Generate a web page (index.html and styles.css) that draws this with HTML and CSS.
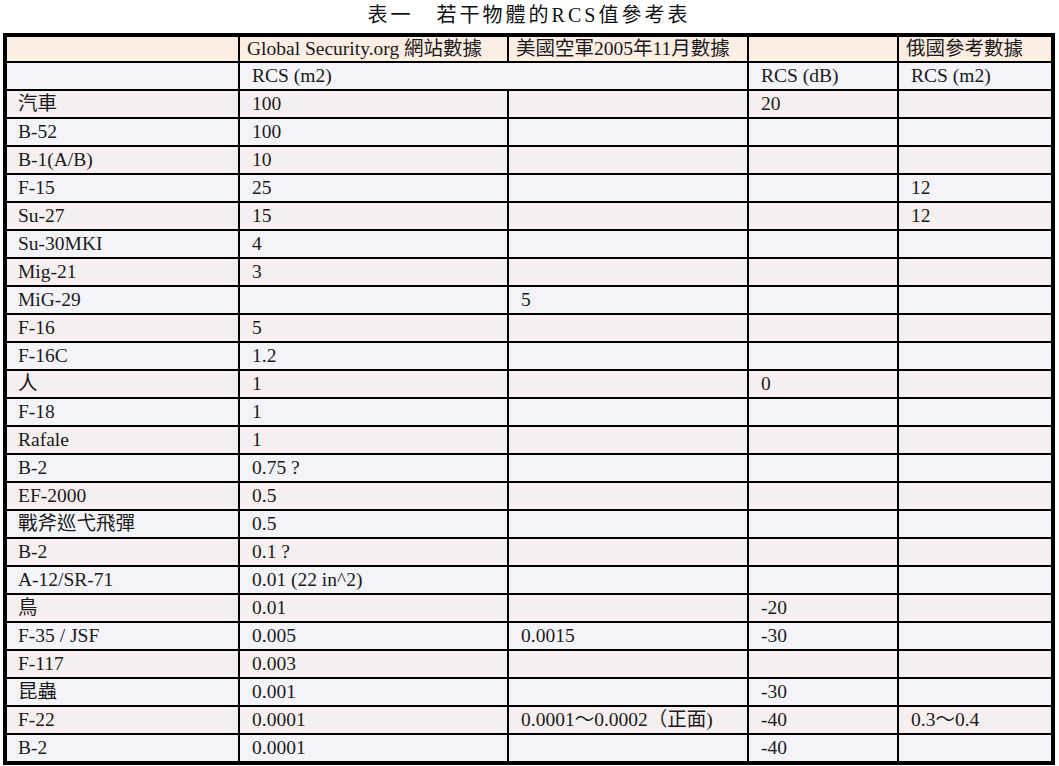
FILE: index.html
```html
<!DOCTYPE html>
<html lang="zh-Hant">
<head>
<meta charset="utf-8">
<title>若干物體的RCS值參考表</title>
<link rel="stylesheet" href="styles.css">
</head>
<body>
<div class="page">
  <h1 class="title">表一　若干物體的RCS值參考表</h1>
  <table class="rcs">
    <colgroup>
      <col class="c1"><col class="c2"><col class="c3"><col class="c4"><col class="c5">
    </colgroup>
    <tr class="head">
      <td></td><td>Global Security.org 網站數據</td><td>美國空軍2005年11月數據</td><td></td><td>俄國參考數據</td>
    </tr>
    <tr class="sub">
      <td></td><td colspan="2">RCS (m2)</td><td>RCS (dB)</td><td>RCS (m2)</td>
    </tr>
    <tr class="odd"><td>汽車</td><td>100</td><td></td><td>20</td><td></td></tr>
    <tr class="even"><td>B-52</td><td>100</td><td></td><td></td><td></td></tr>
    <tr class="odd"><td>B-1(A/B)</td><td>10</td><td></td><td></td><td></td></tr>
    <tr class="even"><td>F-15</td><td>25</td><td></td><td></td><td>12</td></tr>
    <tr class="odd"><td>Su-27</td><td>15</td><td></td><td></td><td>12</td></tr>
    <tr class="even"><td>Su-30MKI</td><td>4</td><td></td><td></td><td></td></tr>
    <tr class="odd"><td>Mig-21</td><td>3</td><td></td><td></td><td></td></tr>
    <tr class="even"><td>MiG-29</td><td></td><td>5</td><td></td><td></td></tr>
    <tr class="odd"><td>F-16</td><td>5</td><td></td><td></td><td></td></tr>
    <tr class="even"><td>F-16C</td><td>1.2</td><td></td><td></td><td></td></tr>
    <tr class="odd"><td>人</td><td>1</td><td></td><td>0</td><td></td></tr>
    <tr class="even"><td>F-18</td><td>1</td><td></td><td></td><td></td></tr>
    <tr class="odd"><td>Rafale</td><td>1</td><td></td><td></td><td></td></tr>
    <tr class="even"><td>B-2</td><td>0.75 ?</td><td></td><td></td><td></td></tr>
    <tr class="odd"><td>EF-2000</td><td>0.5</td><td></td><td></td><td></td></tr>
    <tr class="even"><td>戰斧巡弋飛彈</td><td>0.5</td><td></td><td></td><td></td></tr>
    <tr class="odd"><td>B-2</td><td>0.1 ?</td><td></td><td></td><td></td></tr>
    <tr class="even"><td>A-12/SR-71</td><td>0.01 (22 in^2)</td><td></td><td></td><td></td></tr>
    <tr class="odd"><td>鳥</td><td>0.01</td><td></td><td>-20</td><td></td></tr>
    <tr class="even"><td>F-35 / JSF</td><td>0.005</td><td>0.0015</td><td>-30</td><td></td></tr>
    <tr class="odd"><td>F-117</td><td>0.003</td><td></td><td></td><td></td></tr>
    <tr class="even"><td>昆蟲</td><td>0.001</td><td></td><td>-30</td><td></td></tr>
    <tr class="odd"><td>F-22</td><td>0.0001</td><td>0.0001～0.0002（正面)</td><td>-40</td><td>0.3～0.4</td></tr>
    <tr class="even"><td>B-2</td><td>0.0001</td><td></td><td>-40</td><td></td></tr>
  </table>
</div>
</body>
</html>
```

FILE: styles.css
```css
html, body {
  margin: 0;
  padding: 0;
  background: #ffffff;
}

.page {
  padding: 0 4px 0 3px;
  font-family: "Liberation Serif", "Noto Sans CJK TC", serif;
  color: #1a1a1a;
}

.title {
  margin: 0;
  height: 33px;
  line-height: 30px;
  text-align: center;
  font-family: "Liberation Serif", "Noto Sans CJK TC", serif;
  font-size: 20px;
  font-weight: normal;
  letter-spacing: 3px;
  color: #111111;
}

.rcs {
  border-collapse: separate;
  border-spacing: 0;
  border: 4px solid #000000;
  width: 1052px;
  table-layout: fixed;
  font-size: 19.5px;
}

.c1 { width: 233px; }
.c2 { width: 269px; }
.c3 { width: 240px; }
.c4 { width: 150px; }
.c5 { width: 152px; }

.rcs td {
  border-right: 2px solid #000000;
  border-bottom: 2px solid #000000;
  height: 26px;
  padding: 0 0 0 11px;
  line-height: 24px;
  white-space: nowrap;
  overflow: hidden;
  vertical-align: middle;
}

.rcs td:last-child {
  border-right: 0;
}

.rcs tr:last-child td {
  border-bottom: 0;
}

.rcs tr > td + td {
  padding-left: 12px;
}

.rcs .head td {
  height: 23px;
  background: #fdeee4;
  padding-left: 7px;
}

.rcs .sub td {
  background: #f3f3f9;
}

.rcs .odd td {
  background: #f6efef;
}

.rcs .even td {
  background: #f3f3f9;
}
```
